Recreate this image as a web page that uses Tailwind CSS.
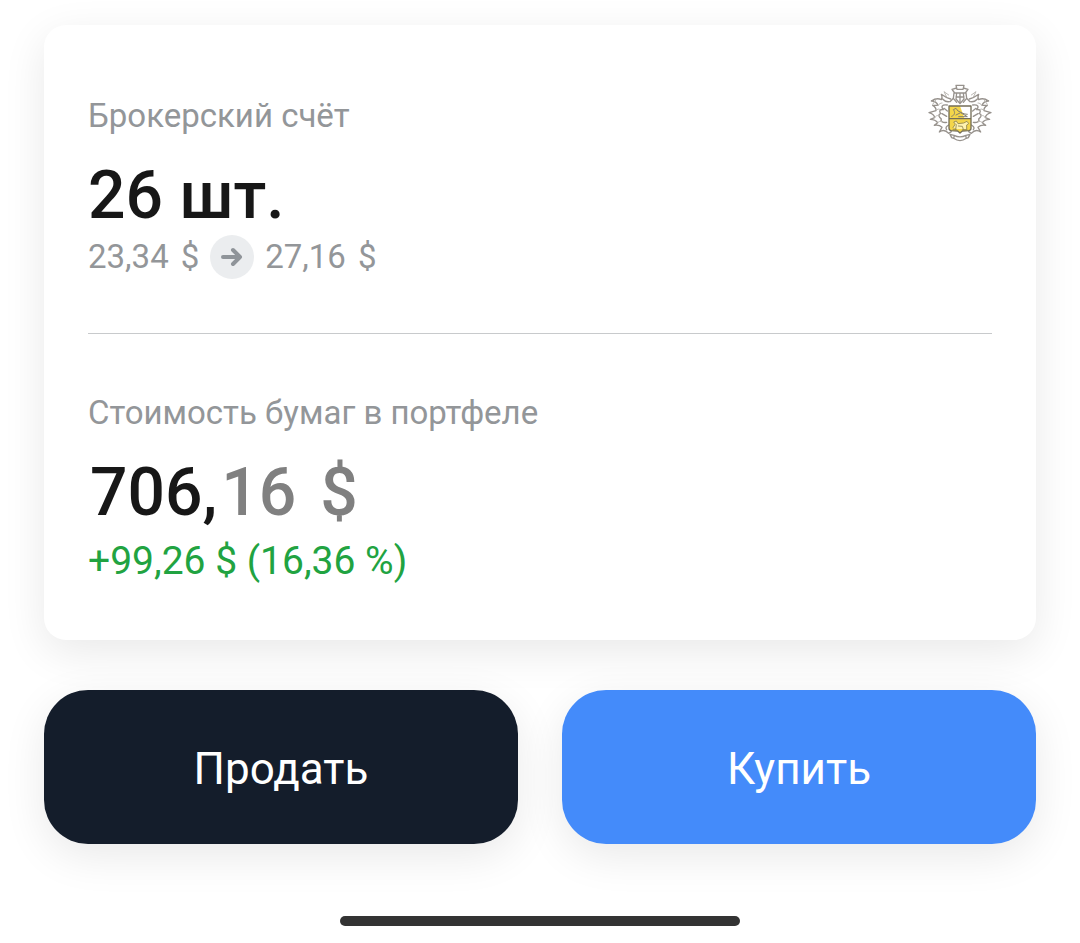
<!DOCTYPE html>
<html lang="ru">
<head>
    <meta charset="UTF-8">
    <meta name="viewport" content="width=device-width, initial-scale=1.0">
    <title>Брокерский счёт</title>
    <script src="https://cdn.jsdelivr.net/npm/@tailwindcss/browser@4"></script>
</head>
<body class="bg-white px-11 pt-[25px] pb-4 font-[Roboto,sans-serif] text-[#939699]">
    <main>
        <section class="rounded-[22px] bg-white px-11 pt-[59px] pb-[55px] shadow-[0_12px_44px_rgba(0,0,0,0.09)]">
            <div class="flex items-start justify-between">
                <h2 class="mt-3 text-[33px] leading-10">Брокерский счёт</h2>
                <!-- bank emblem -->
                <svg class="h-[58px] w-16" viewBox="36 27 192 174" fill="none" stroke="#97928d" stroke-width="4" stroke-linejoin="round" stroke-linecap="round" aria-hidden="true">
                    <g>
                        <path d="M104 72C94 70 84 64 76 58C79 66 80 70 76 74C68 70 58 70 46 78C57 78 63 83 66 91L50 91C58 96 61 101 60 107L39 113C50 116 55 121 56 128L43 133C53 133 60 136 65 143L55 151C65 149 72 151 78 157L70 171C80 164 90 166 98 175L106 170" />
                        <path d="M100 80C88 82 84 76 80 72M94 90C78 88 74 94 82 104C72 102 68 108 74 116C66 118 68 126 76 132C72 140 82 144 92 142M84 100L94 108M78 116L92 124M98 150C90 154 88 160 92 164" />
                        <path d="M66 91C70 86 74 84 78 84M60 107C65 101 69 101 72 104M56 128C60 121 65 120 69 123M65 143C69 139 73 138 78 140M92 66L84 50L98 60M60 74L50 88" stroke="#bbb8b3" stroke-width="3" />
                    </g>
                    <g>
                        <path d="M160 72C170 70 180 64 188 58C185 66 184 70 188 74C196 70 206 70 218 78C207 78 201 83 198 91L214 91C206 96 203 101 204 107L225 113C214 116 209 121 208 128L221 133C211 133 204 136 199 143L209 151C199 149 192 151 186 157L194 171C184 164 174 166 166 175L158 170" />
                        <path d="M164 80C176 82 180 76 184 72M170 90C186 88 190 94 182 104C192 102 196 108 190 116C198 118 196 126 188 132C192 140 182 144 172 142M180 100L170 108M186 116L172 124M166 150C174 154 176 160 172 164" />
                        <path d="M198 91C194 86 190 84 186 84M204 107C199 101 195 101 192 104M208 128C204 121 199 120 195 123M199 143C195 139 191 138 186 140M172 66L180 50L166 60M204 74L214 88" stroke="#bbb8b3" stroke-width="3" />
                    </g>
                    <!-- crown and helmet -->
                    <path d="M120 31L144 31L141 43L123 43ZM108 43L122 39M156 43L142 39M108 43L116 54L148 54L156 43M114 54L112 70L102 80M150 54L152 70L162 80M122 54L120 72L132 86L144 72L142 54M120 66L144 66M132 54V84M112 70L122 82M152 70L142 82" />
                    <!-- shield -->
                    <path d="M99 93H165V160Q165 166 158 167L139 168L132 174L125 168L106 167Q99 166 99 160Z" fill="#fff" stroke="none" />
                    <path d="M99 93H132L145 129H99ZM99 132H165V160Q165 166 158 167L139 168L132 174L125 168L106 167Q99 166 99 160Z" fill="#f4d64a" stroke="none" />
                    <path d="M99 93H165V160Q165 166 158 167L139 168L132 174L125 168L106 167Q99 166 99 160ZM99 131H165" stroke="#746e58" stroke-width="4" />
                    <path d="M107 124C117 121 118 111 112 104L120 100L126 108C137 112 142 118 154 118M120 120L134 113L154 125H128" stroke="#857f6d" stroke-width="3" />
                    <path d="M111 158L118 147L113 141L121 138L126 146L143 144L153 139L158 146L152 150V162M121 149L119 163M127 153L139 154L142 163M111 163H121M140 164H153" fill="#fff3b0" stroke="#8d834f" stroke-width="2.5" />
                    <!-- motto ribbon -->
                    <path d="M102 178L114 181Q132 190 150 181L162 178L157 188L151 190Q132 204 113 190L107 188ZM115 182L113 190M149 182L151 190" />
                </svg>
            </div>
            <p class="mt-[15px] text-[66px] leading-[78px] font-medium text-[#171717]">26 шт.</p>
            <p class="flex items-center gap-[11px] text-[33px] leading-10">
                <span class="flex gap-3"><span>23,34</span> <span>$</span></span>
                <span class="flex size-11 items-center justify-center rounded-full bg-[#ebedef]">
                    <svg class="size-6" viewBox="0 0 24 24" fill="none" stroke="#8f9499" stroke-width="4" stroke-linecap="round" stroke-linejoin="round" aria-hidden="true">
                        <path d="M3 12H20M13 5L20 12L13 19" />
                    </svg>
                </span>
                <span class="flex gap-3"><span>27,16</span> <span>$</span></span>
            </p>

            <hr class="mt-[54px] border-[#c8cacc]">

            <h2 class="mt-[59px] text-[33px] leading-10">Стоимость бумаг в портфеле</h2>
            <p class="mt-5 flex gap-1 pl-0.5 text-[66px] leading-[80px] font-medium text-[#171717]">
                <span>706,</span>
                <span class="flex gap-6 text-[#808080]"><span>16</span> <span>$</span></span>
            </p>
            <p class="mt-1 text-[39px] leading-12 text-[#21a341]">+99,26 $ (16,36 %)</p>
        </section>

        <div class="mt-[50px] grid grid-cols-2 gap-11 text-[44px] leading-[50px] text-white">
            <button type="button" class="rounded-[44px] bg-[#141d2b] pt-[54px] pb-[50px] shadow-[0_12px_44px_rgba(0,0,0,0.09)]">Продать</button>
            <button type="button" class="rounded-[44px] bg-[#448bfa] pt-[54px] pb-[50px] shadow-[0_12px_44px_rgba(0,0,0,0.09)]">Купить</button>
        </div>
    </main>

    <!-- home indicator -->
    <div class="mx-auto mt-[72px] h-2.5 w-[400px] rounded-full bg-[#333333]"></div>
</body>
</html>
